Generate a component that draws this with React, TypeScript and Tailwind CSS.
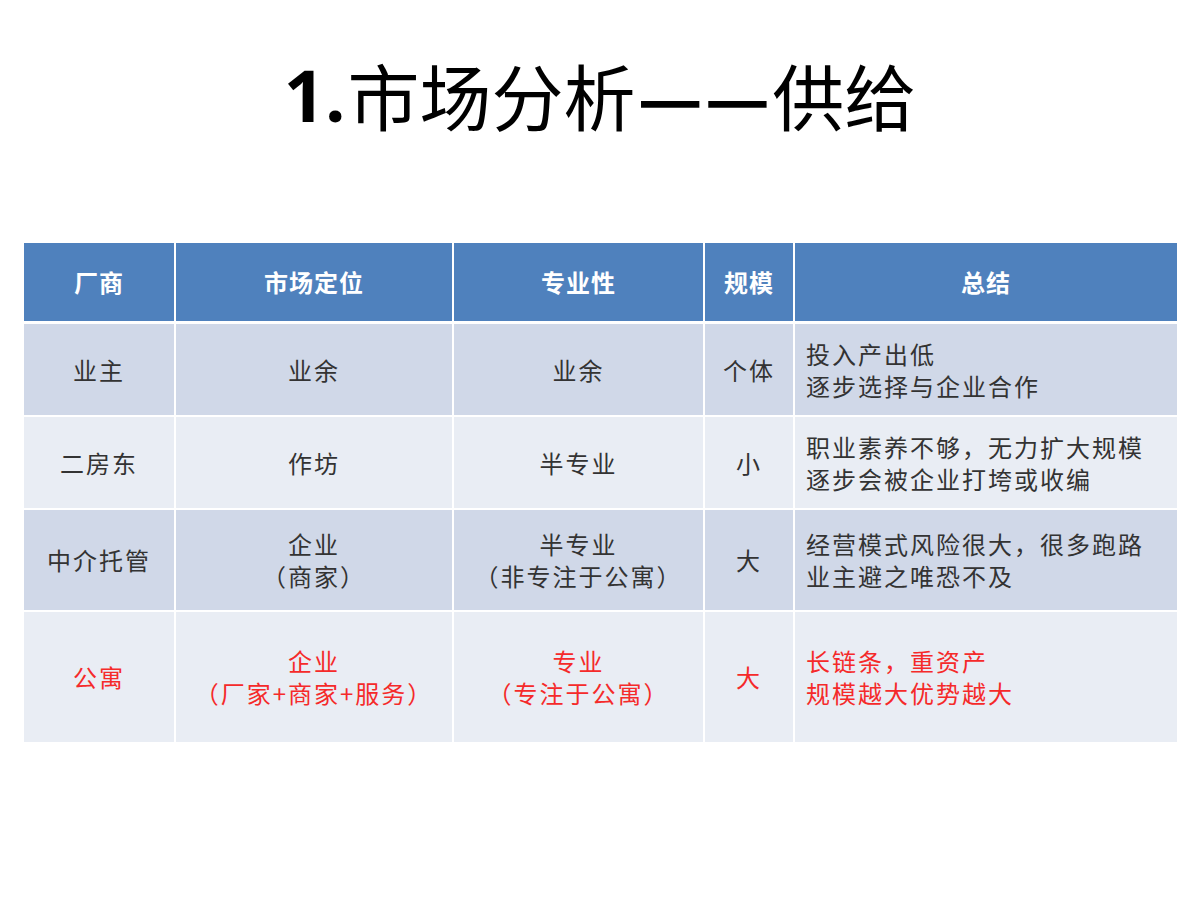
import React from "react";

type Row = {
  name: string;
  position: string[];
  pro: string[];
  scale: string;
  summary: string[];
  bg: string;
  height: string;
  red?: boolean;
};

const rows: Row[] = [
  {
    name: "业主",
    position: ["业余"],
    pro: ["业余"],
    scale: "个体",
    summary: ["投入产出低", "逐步选择与企业合作"],
    bg: "bg-[#d0d8e8]",
    height: "h-[91px]",
  },
  {
    name: "二房东",
    position: ["作坊"],
    pro: ["半专业"],
    scale: "小",
    summary: ["职业素养不够，无力扩大规模", "逐步会被企业打垮或收编"],
    bg: "bg-[#e9edf4]",
    height: "h-[91px]",
  },
  {
    name: "中介托管",
    position: ["企业", "（商家）"],
    pro: ["半专业", "（非专注于公寓）"],
    scale: "大",
    summary: ["经营模式风险很大，很多跑路", "业主避之唯恐不及"],
    bg: "bg-[#d0d8e8]",
    height: "h-[100px]",
  },
  {
    name: "公寓",
    position: ["企业", "（厂家+商家+服务）"],
    pro: ["专业", "（专注于公寓）"],
    scale: "大",
    summary: ["长链条，重资产", "规模越大优势越大"],
    bg: "bg-[#e9edf4]",
    height: "h-[130px]",
    red: true,
  },
];

const headers = ["厂商", "市场定位", "专业性", "规模", "总结"];

const font = "font-['Noto_Sans_CJK_SC',sans-serif]";

export default function App() {
  return (
    <div className={`w-[1200px] h-[900px] bg-white ${font}`}>
      <div className="pt-[58px] flex justify-center">
        <h1 className="text-[72px] leading-none text-black font-normal flex">
          <span className="font-['Open_Sans',sans-serif] font-bold mr-[2px]">1.</span>
          <span>市场分析</span>
          <span className="mx-[2px] font-bold">—</span>
          <span className="mr-[2px] font-bold">—</span>
          <span>供给</span>
        </h1>
      </div>

      <div className="mt-[113px] ml-[24px] w-[1153px] grid grid-cols-[150px_276px_249px_88px_382px] gap-x-[2px]">
        {headers.map((h) => (
          <div
            key={h}
            className="h-[78px] mb-[3px] bg-[#4f81bd] flex items-center justify-center text-white text-[24px] font-bold tracking-[1px]"
          >
            {h}
          </div>
        ))}

        {rows.map((r, i) => {
          const color = r.red ? "text-[#f52a2a]" : "text-[#333333]";
          const cell = `${r.height} ${r.bg} ${color} text-[24px] leading-[32px] tracking-[2px] flex flex-col justify-center ${
            i < rows.length - 1 ? "mb-[2px]" : ""
          }`;
          return (
            <React.Fragment key={r.name}>
              <div className={`${cell} items-center`}>{r.name}</div>
              <div className={`${cell} items-center`}>
                {r.position.map((t) => (
                  <span key={t}>{t}</span>
                ))}
              </div>
              <div className={`${cell} items-center`}>
                {r.pro.map((t) => (
                  <span key={t}>{t}</span>
                ))}
              </div>
              <div className={`${cell} items-center`}>{r.scale}</div>
              <div className={`${cell} items-start pl-[11px]`}>
                {r.summary.map((t) => (
                  <span key={t}>{t}</span>
                ))}
              </div>
            </React.Fragment>
          );
        })}
      </div>
    </div>
  );
}
